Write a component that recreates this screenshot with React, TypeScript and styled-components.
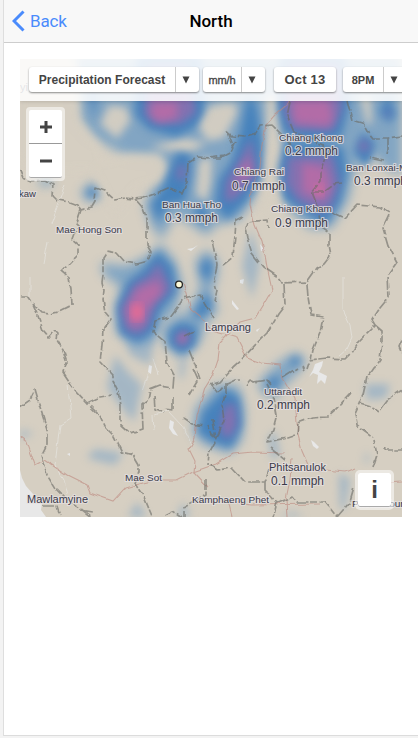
import React from 'react';
import styled, { createGlobalStyle } from 'styled-components';

const GlobalStyle = createGlobalStyle`
  * { box-sizing: border-box; }
  html, body { margin: 0; padding: 0; overflow: hidden; background: #f3f3f3; }
`;

const Page = styled.div`
  width: 418px;
  height: 738px;
  padding: 0 0 2px 3px;
  background: #f3f3f3;
  font-family: Roboto, sans-serif;
`;

const Screen = styled.main`
  height: 736px;
  background: #fff;
  border-left: 1px solid #dedede;
  border-bottom: 1px solid #dcdcdc;
`;

const Header = styled.header`
  display: grid;
  grid-template-columns: 1fr auto 1fr;
  align-items: center;
  height: 43px;
  background: #f8f8f8;
  border-bottom: 1px solid #cdcdcd;
`;

const BackButton = styled.button`
  display: flex;
  align-items: center;
  justify-self: start;
  gap: 5px;
  padding: 0 0 0 8px;
  border: 0;
  background: none;
  color: #4a8bfc;
  font: 400 17px Roboto, sans-serif;
  letter-spacing: -0.2px;
`;

const Title = styled.h1`
  margin: 0;
  font: 500 17px Roboto, sans-serif;
  color: #000;
`;

const MapPanel = styled.section`
  position: relative;
  width: 382px;
  height: 458px;
  margin: 16px 0 0 16px;
  overflow: hidden;
  background: #d6cfc2;
  font-family: 'Liberation Sans', Arial, sans-serif;
`;

const MapSvg = styled.svg`
  display: block;
  width: 382px;
  height: 458px;
`;

const Toolbar = styled.div`
  position: absolute;
  inset: 0 0 auto 0;
  display: flex;
  align-items: flex-start;
  height: 42px;
  padding: 8px 0 0 9px;
  background: rgba(255, 255, 255, 0.87);
  box-shadow: 0 0 4px rgba(0, 0, 0, 0.2);
`;

const Control = styled.div<{ $width: number; $gap?: number }>`
  display: flex;
  flex: none;
  width: ${p => p.$width}px;
  height: 25px;
  margin-right: ${p => p.$gap ?? 0}px;
  background: #fff;
  border-radius: 3px;
  box-shadow: 0 1px 2px rgba(0, 0, 0, 0.45);
  color: #444;
`;

const ControlLabel = styled.span<{ $size: number; $spacing?: number; $light?: boolean }>`
  flex: 1;
  display: flex;
  align-items: center;
  justify-content: center;
  white-space: nowrap;
  font-size: ${p => p.$size}px;
  font-weight: ${p => (p.$light ? 'normal' : 'bold')};
  letter-spacing: ${p => p.$spacing ?? 0}px;
  color: #444;
  -webkit-text-stroke: ${p => (p.$light ? '0.3px #444' : '0')};
`;

const Arrow = styled.span<{ $width: number }>`
  display: flex;
  align-items: center;
  padding-left: 6px;
  width: ${p => p.$width}px;
  border-left: 1px solid #ccc;
`;

const Zoom = styled.div`
  position: absolute;
  left: 6px;
  top: 48px;
  width: 39px;
  padding: 3px;
  border-radius: 4px;
  background: rgba(255, 255, 255, 0.55);
`;

const ZoomButton = styled.button<{ $last?: boolean }>`
  display: flex;
  align-items: center;
  justify-content: center;
  width: 33px;
  height: 34px;
  padding: 0;
  border: 0;
  border-bottom: 1px solid ${p => (p.$last ? '#aaa' : '#999')};
  border-radius: ${p => (p.$last ? '0 0 2px 2px' : '2px 2px 0 0')};
  background: #fff;
`;

const InfoButton = styled.button`
  position: absolute;
  left: 335px;
  top: 411px;
  width: 39px;
  height: 40px;
  padding: 0;
  border: 3px solid rgba(255, 255, 255, 0.55);
  border-radius: 5px;
  background: #fff;
  background-clip: padding-box;
  box-shadow: inset 0 -1px 0 #aaa;
  color: #444;
  font: bold 24px/34px 'Liberation Sans', Arial, sans-serif;
`;

const borders = [
  'M20 170L23 178L31 181L45 180L53 185L52 195L57 200L70 202L78 205L80 210L92 207L95 202L96 188L105 191L115 200L125 198L135 199L143 198L157 193L168 188L182 194L187 182L188 163L198 157L210 158L224 156',
  'M135 199L142 207L147 220L147 245L151 252L148 261L137 264L125 262L117 253L107 251L103 257L103 275L102 282L104 290L103 300L105 312L111 319L103 330L102 345L100 362L112 375L112 380L118 392L121 405L121 425L130 433L143 429L142 405L148 400L150 390L160 386L173 388L174 375L167 362L165 342L153 332L155 321L170 317L178 306L183 298L200 295L207 307L213 318',
  'M80 210L76 222L80 226L75 232L72 240L78 245L78 255L68 265L62 271L69 277L71 290L72 305L58 312L50 314L42 313L32 303L27 296L20 296',
  'M32 303L38 316L43 330L49 337L55 330L58 333L57 340L63 350L67 362L63 372L75 390L87 403L100 416L105 427L114 436L122 452L133 455L139 465L139 472L135 484L144 497L152 516',
  'M87 403L100 397L112 395M20 407L30 400L35 390L40 407L47 430L47 445L42 455L47 475L55 488L65 498L80 508L91 517',
  'M226 131L232 136L245 137L255 134L260 126L272 125L282 135L292 145M228 132L234 148M210 158L220 158L231 152L236 141',
  'M347 100L352 120L363 123L368 132L373 138L388 138L402 136M388 138L388 148L387 155M384 160L370 157M290 102L287 116L294 132L312 140L323 145L325 158L320 172L320 182L312 192L317 205L322 228L329 233L329 245L331 255L324 264L317 268L307 282L282 283L278 277L263 267L252 253L247 238L245 228L247 222L267 220L268 228',
  'M312 192L323 192L334 184L342 183M332 212L345 218L357 205L380 207L390 213L383 228L388 245L397 262L388 275L389 297L380 308L372 320L375 325L358 342L352 352L345 359L327 358L310 360L307 369M375 325L382 331L382 342L380 360L373 370L367 377L363 395L355 413L357 425L373 437M360 403L370 406L378 412L387 400L402 390',
  'M307 284L308 297L311 315L323 317L320 333L313 350L311 360M284 285L285 305L278 314L267 333L257 343L243 358L233 367L220 382L210 385M212 240L217 265L214 280L217 290L215 302M242 217L236 220L235 235L233 257L223 265',
  'M210 384L218 393L225 385L235 380L240 380M253 382L267 380L272 386M283 377L297 368M302 367L304 371M226 383L226 393L222 405L224 420L217 438L212 434L208 425',
  'M267 384L274 398L277 415L273 430L267 442L288 438L297 435L298 423L312 418L327 417L337 408L352 392M270 448L285 460M246 385L250 380L257 383',
  'M210 465L217 470L232 468L245 482L265 482L269 470M265 482L265 490L277 503L273 517M277 503L293 497L297 502L325 502L337 517L350 502L354 488M373 467L377 455L374 440M383 447L386 450L402 450',
  'M155 395L156 410L164 413M173 397L173 410L163 409M193 369L198 380L189 395M183 418L192 424L204 426M189 350L195 365L200 379M184 337L194 332M213 419L216 440L209 453L208 465M206 478L206 495L184 507L184 517M80 510L92 512M165 515L173 511L182 517',
  'M402 340L399 347L402 354M43 506L57 506L60 515',
];

const roads = [
  'M290 102L275 115L266 125L262 145L260 168L251 190L250 205L255 225L262 242L265 255L267 267L272 290L265 302L255 318L240 322L227 335L212 331L200 316L190 308L187 294L183 283',
  'M227 335L220 342L218 360L213 375L205 388L197 415L195 438L189 449L195 461L194 472L208 487M227 335L237 338L247 358L262 363L280 365L281 375L287 385L295 398L298 435L302 451L309 467L306 471',
  'M20 437L27 442L35 465L45 460L67 475L87 485L90 493L113 501L125 488L143 483L157 480L177 480L193 472L216 464L232 454L253 452L285 453M306 471L325 470L345 472L355 468M292 458L290 480L286 499L287 517M220 500L250 505L320 504M228 500L232 517M367 484L402 482',
];

// Nested contours from light rain (outer) to heavy rain (core).
const haze = [
  'M75 55H402V175L385 168L368 148L355 170L349 199L332 228L310 229L290 211L279 184L280 151L269 130L262 157L259 190L240 220L216 225L207 236L193 226L175 215L162 240L151 226L144 204L160 174L160 160L128 158L110 147L90 137L75 120Z',
  'M151 254L160 243L175 260L183 285L176 311L160 323L153 341L136 347L117 333L115 309L121 287L104 275L100 263L126 266Z',
  'M195 261L207 249L218 261L217 278L212 290L218 312L207 321L200 342L182 359L165 346L161 329L175 318L188 311L200 288Z',
  'M195 409L215 385L239 385L245 410L242 441L229 454L202 444L193 433Z',
  'M258 382L280 361L296 352L306 360L300 371L285 385L277 398L262 394Z',
  'M80 193L93 180L103 195L90 203ZM57 180L45 187L35 180Z',
];
const gaps = [
  'M109 105L126 107L131 120L117 139L100 124Z',
  'M150 147L183 138L207 143L188 154Z',
  'M201 109L222 103H235L238 112L224 138L208 141L197 125Z',
  'M129 153L160 154L170 169L162 182L138 188L115 214L88 165Z',
  'M266 95L281 95L280 137L284 154L278 205L264 216L261 187L265 151Z',
  'M360 95L370 95L372 121L367 126ZM199 160L212 157L211 183L206 202L196 194Z',
  'M20 60L75 60L82 120L100 145L106 170L60 171L20 160Z',
];
const rain = [
  'M137 55H201L205 112L195 128L176 137L148 129L135 115Z',
  'M281 55H345L349 106L341 137L312 141L284 133L277 107Z',
  'M285 142L343 147L347 173L340 202L325 225L305 212L284 200L278 168Z',
  'M248 93L256 104L263 144L262 176L246 202L227 220L215 204L219 179L232 160L240 133Z',
  'M176 152L192 154L190 178L185 202L168 204L159 223L151 205L163 187Z',
  'M158 251L173 267L176 292L160 311L154 332L138 342L120 333L117 306L128 281L142 271Z',
  'M181 322L197 327L195 346L182 354L169 345L169 330Z',
  'M206 257L213 266L208 282L200 270ZM207 292L212 307L201 318L193 315Z',
  'M203 412L225 389L239 397L242 425L231 448L211 441L198 432Z',
  'M297 356L301 362L294 366L289 362ZM272 377L281 379L275 390L267 385Z',
  'M362 133L375 142L373 158L364 169L354 151ZM388 95L396 114L389 123L379 112Z',
  'M89 90L97 90L94 120ZM195 204L208 209L205 226L196 216ZM93 187L97 193L92 198L86 193Z',
];
const purple = [
  'M149 66H188L196 113L181 124L154 123L144 114Z', 'M287 65H338L342 109L333 131L292 129L284 109Z',
  'M288 157L333 155L339 182L331 207L321 213L297 200L286 184Z', 'M251 138L257 174L236 198L225 203L226 182L238 163Z',
  'M159 262L171 289L156 304L148 327L138 335L126 330L121 309L134 284L148 276Z', 'M184 330L190 337L182 346L175 339Z',
  'M227 403L235 405L237 425L230 438L221 435L221 418Z', 'M181 162L186 171L182 182L176 176ZM364 138L370 148L364 153L358 147ZM388 108L391 114L385 118Z',
];
const pink = [
  'M153 102H178L177 118L159 123L150 114Z', 'M292 100H329L333 117L329 126L294 123Z',
  'M302 163L325 167L331 190L323 200L302 192Z', 'M251 158L249 177L239 183L241 168Z',
  'M159 280L162 293L148 307L142 325L130 325L126 310L137 290ZM183 332L188 338L182 344L177 339Z',
];
const faint = [
  'M115 355L128 372L142 385L134 422L120 405L107 388Z', 'M123 330L155 333L150 365L130 355Z',
  'M87 457L95 449L123 453L115 465L94 460Z', 'M20 430L34 433L25 437H20Z',
  'M339 473L350 479L345 508L340 510ZM365 384L390 384L386 398L367 400Z', 'M137 502L147 517H128ZM183 502L191 517H177Z',
  'M275 430L280 455L272 460L268 438ZM365 452L370 458L365 465Z', 'M278 517L293 512L305 517ZM180 360L186 358L184 376L179 380Z',
  'M251 228L260 263L252 299L242 266ZM42 179L51 179L47 186Z',
];
const lakes = [
  'M309 377L313 370L315 364L323 361L322 366L319 372L327 376L325 384L321 380L317 384L318 375L313 373ZM170 420L174 422L173 428L178 436L173 434L169 428ZM149 365L152 366L151 374L148 372ZM311 440L314 442L319 447L317 449L313 446Z',
  'M187 249L193 248L198 245L191 251ZM232 300L239 309L237 310L232 304ZM260 244L265 250L261 251ZM240 280L244 279L243 284L240 283ZM256 330L260 328L257 332ZM67 454L70 453L70 456Z',
  'M20 470L22 478L26 486L33 494L37 500L42 503L41 510L46 517H20Z',
];
const streams = [
  'M68 385L71 418L60 425L58 440L55 465L64 480L68 495M148 373L142 390M158 375L153 358M153 415L154 430M343 277V310L350 325L352 338L347 349L338 357M155 415L168 411L182 426L191 444M48 242L44 263M30 277V297M65 185L51 224',
];

type Label = [name: string, x: number, y: number, width: number, size: number];
const labels: Label[] = [
  ['kaw', 19, 197, 17, 9.5], ['Mae Hong Son', 56, 233, 66, 9.5], ['Ban Hua Tho', 162, 208, 59, 9.5],
  ['Chiang Rai', 234, 175, 50, 9.5], ['Chiang Khong', 279, 141, 64, 9.5], ['Chiang Kham', 271, 212, 61, 9.5],
  ['Ban Lonxai-Mai', 346, 171, 69, 9.5], ['Lampang', 205, 331, 46, 11], ['Uttaradit', 264, 395, 38, 9.5],
  ['Phitsanulok', 269, 471, 57, 11], ['Mae Sot', 125, 481, 37, 9.5], ['Mawlamyine', 27, 503, 61, 10.5],
  ['Kamphaeng Phet', 192, 503, 77, 9.5], ['Phetchabun', 352, 507, 54, 9.5],
  ['0.2 mmph', 285, 155, 53, 12], ['0.7 mmph', 232, 190, 53, 12], ['0.3 mmph', 165, 222, 53, 12],
  ['0.9 mmph', 275, 227, 53, 12], ['0.3 mmph', 354, 185, 53, 12], ['0.2 mmph', 257, 409, 53, 12],
  ['0.1 mmph', 271, 485, 53, 12],
];

const Shape = ({ paths, fill, blur, opacity = 1 }: { paths: string[]; fill: string; blur?: string; opacity?: number }) => (
  <path d={paths.join('')} fill={fill} opacity={opacity} filter={blur ? `url(#${blur})` : undefined} />
);

function WeatherMap() {
  return (
    <MapSvg viewBox="20 59 382 458">
      <defs>
        <filter id="soft" x="-10%" y="-10%" width="120%" height="120%" colorInterpolationFilters="sRGB"><feGaussianBlur stdDeviation="5.5" /></filter>
        <filter id="mid" x="-10%" y="-10%" width="120%" height="120%" colorInterpolationFilters="sRGB"><feGaussianBlur stdDeviation="4.4" /></filter>
        <filter id="rough" filterUnits="userSpaceOnUse" x="10" y="50" width="410" height="480" colorInterpolationFilters="sRGB">
          <feTurbulence type="fractalNoise" baseFrequency="0.12" numOctaves="1" seed="4" result="noise" />
          <feDisplacementMap in="SourceGraphic" in2="noise" scale="5" xChannelSelector="R" yChannelSelector="G" />
          <feGaussianBlur stdDeviation="0.3" />
        </filter>
      </defs>
      <rect x="20" y="59" width="382" height="458" fill="#d6cfc2" />
      <Shape paths={lakes} fill="#e8e8e8" />
      <path d={streams.join('')} fill="none" stroke="#e1ded7" strokeWidth="1" filter="url(#rough)" />
      <Shape paths={haze} fill="#6296c4" blur="soft" opacity={0.72} />
      <Shape paths={faint} fill="#739fc7" blur="mid" opacity={0.5} />
      <Shape paths={gaps} fill="#d6cfc2" blur="mid" opacity={0.95} />
      <Shape paths={rain} fill="#4682bc" blur="mid" />
      <Shape paths={purple} fill="#8870b0" blur="mid" opacity={0.92} />
      <Shape paths={pink} fill="#bf6ba5" blur="mid" opacity={0.8} />
      <ellipse cx="137" cy="312" rx="6" ry="9" fill="#e66c94" filter="url(#mid)" />
      <ellipse cx="319" cy="191" rx="5" ry="7" fill="#df6d9b" opacity=".6" filter="url(#mid)" />
      <path d={roads.join('')} fill="none" stroke="#bd887e" strokeWidth="1.1" opacity=".6" filter="url(#rough)" />
      <path d={borders.join('')} fill="none" stroke="#6b6b65" strokeWidth="1.7" strokeDasharray="12 1.5 7 2.5" strokeLinejoin="round" opacity=".6" filter="url(#rough)" />
      <text x="20" y="91" fontSize="11" fill="#34343f">yi</text>
      {labels.map(([name, x, y, width, size]) => (
        <text key={`${name}${x}`} x={x} y={y} textLength={width} lengthAdjust="spacingAndGlyphs" fontSize={size} fill="#3a3a48" stroke="#e5e0e1" strokeWidth="2.2" strokeOpacity=".8" paintOrder="stroke" strokeLinejoin="round">{name}</text>
      ))}
      <circle cx="179" cy="284.5" r="3.4" fill="#fffbd9" stroke="#242424" strokeWidth="1.3" />
    </MapSvg>
  );
}

const Caret = () => <svg width="8" height="8"><path d="M.5.5H7.5L4 7.5Z" fill="#444" /></svg>;

export default function App() {
  return (
    <Page>
      <GlobalStyle />
      <Screen>
        <Header>
          <BackButton>
            <svg width="13" height="22" viewBox="0 0 13 22"><path d="M11.5 1.5L2 11L11.5 20.5" fill="none" stroke="#4a8bfc" strokeWidth="3" /></svg>
            Back
          </BackButton>
          <Title>North</Title>
        </Header>
        <MapPanel>
          <WeatherMap />
          <Toolbar>
            <Control $width={170} $gap={4}><ControlLabel $size={12} $spacing={0.02}>Precipitation Forecast</ControlLabel><Arrow $width={24}><Caret /></Arrow></Control>
            <Control $width={62} $gap={9}><ControlLabel $size={11} $light $spacing={-0.1}>mm/h</ControlLabel><Arrow $width={24}><Caret /></Arrow></Control>
            <Control $width={62} $gap={7}><ControlLabel $size={13} $spacing={0.2}>Oct 13</ControlLabel></Control>
            <Control $width={64}><ControlLabel $size={11}>8PM</ControlLabel><Arrow $width={24}><Caret /></Arrow></Control>
          </Toolbar>
          <Zoom>
            <ZoomButton aria-label="Zoom in"><svg width="12" height="12"><path d="M0 6H12M6 0V12" stroke="#444" strokeWidth="3" /></svg></ZoomButton>
            <ZoomButton $last aria-label="Zoom out"><svg width="12" height="12"><path d="M0 6H12" stroke="#444" strokeWidth="3" /></svg></ZoomButton>
          </Zoom>
          <InfoButton>i</InfoButton>
        </MapPanel>
      </Screen>
    </Page>
  );
}
